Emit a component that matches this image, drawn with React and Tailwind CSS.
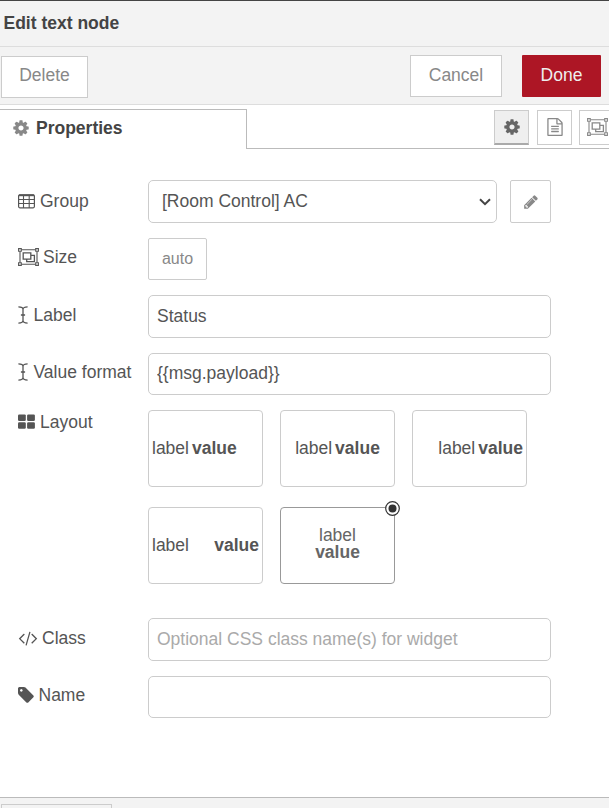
const CogIcon = ({ className = '' }) => (
  <svg width="18" height="18" viewBox="0 0 1792 1792" fill="currentColor" className={`shrink-0 ${className}`}>
    <path d="M1152 896q0-106-75-181t-181-75-181 75-75 181 75 181 181 75 181-75 75-181zm512-109v222q0 12-8 23t-20 13l-185 28q-19 54-39 91 35 50 107 138 10 12 10 25t-9 23q-27 37-99 108t-94 71q-12 0-26-9l-138-108q-44 23-91 38-16 136-29 186-7 28-36 28h-222q-14 0-24.5-8.5t-11.5-21.5l-28-184q-49-16-90-37l-141 107q-10 9-25 9-14 0-25-11-126-114-165-168-7-10-7-23 0-12 8-23 15-21 51-66.5t54-70.5q-27-50-41-99l-183-27q-13-2-21-12.5t-8-23.5v-222q0-12 8-23t19-13l186-28q14-46 39-92-40-57-107-138-10-12-10-24 0-10 9-23 26-36 98.5-107.5t94.5-71.5q13 0 26 10l138 107q44-23 91-38 16-136 29-186 7-28 36-28h222q14 0 24.5 8.5t11.5 21.5l28 184q49 16 90 37l142-107q9-9 24-9 13 0 25 10 129 119 165 170 7 8 7 22 0 12-8 23-15 21-51 66.5t-54 70.5q26 50 41 98l183 28q13 2 21 12.5t8 23.5z" />
  </svg>
);

const FileIcon = () => (
  <svg width="18" height="18" viewBox="0 0 1792 1792" fill="currentColor" className="shrink-0">
    <path d="M1596 380q28 28 48 76t20 88v1152q0 40-28 68t-68 28h-1344q-40 0-68-28t-28-68v-1600q0-40 28-68t68-28h896q40 0 88 20t76 48zm-444-244v376h376q-10-29-22-41l-313-313q-12-12-41-22zm384 1528v-1024h-416q-40 0-68-28t-28-68v-416h-768v1536h1280zm-1024-864q0-14 9-23t23-9h704q14 0 23 9t9 23v64q0 14-9 23t-23 9h-704q-14 0-23-9t-9-23v-64zm736 224q14 0 23 9t9 23v64q0 14-9 23t-23 9h-704q-14 0-23-9t-9-23v-64q0-14 9-23t23-9h704zm0 256q14 0 23 9t9 23v64q0 14-9 23t-23 9h-704q-14 0-23-9t-9-23v-64q0-14 9-23t23-9h704z" />
  </svg>
);

const GroupIcon = () => (
  <svg width="21" height="18" viewBox="0 0 21 18" fill="none" stroke="currentColor" strokeWidth="1.1" className="shrink-0">
    <path d="M3.4 1.8h14.2M3.4 16.2h14.2M2 3.2v11.6M19 3.2v11.6" />
    <path d="M.6.6h2.7v2.6H.6zM17.7.6h2.7v2.6h-2.7zM.6 14.8h2.7v2.6H.6zM17.7 14.8h2.7v2.6h-2.7z" />
    <path d="M5.2 4.8h7.6v6.4H5.2zM12.8 7.3h3.6v6.4H8.7v-2.5" strokeWidth="1.3" />
  </svg>
);

const TableIcon = () => (
  <svg width="17" height="15" viewBox="0 0 17 15" fill="none" stroke="currentColor" className="shrink-0">
    <rect x=".6" y=".8" width="15.8" height="13" rx="1.2" strokeWidth="1.2" />
    <path d="M1 1.3h15" strokeWidth="1.8" />
    <path d="M.6 5.5h15.8M.6 9.5h15.8M5.5 2v12M11.2 2v12" strokeWidth="1.1" />
  </svg>
);

const CursorIcon = () => (
  <svg width="10" height="18" viewBox="0 0 10 18" fill="none" stroke="currentColor" strokeWidth="1.3" className="shrink-0">
    <path d="M.4.9C3.2.9 5 1.6 5 3.4 5 1.6 6.8.9 9.6.9M.4 17.1c2.8 0 4.6-.7 4.6-2.5 0 1.8 1.8 2.5 4.6 2.5M5 3v12M2.9 9h4.2" />
  </svg>
);

const TilesIcon = () => (
  <svg width="17" height="15" viewBox="0 0 17 15" fill="currentColor" className="shrink-0">
    <rect width="7.8" height="6.5" y=".4" rx="1.2" />
    <rect x="9.1" y=".4" width="7.8" height="6.5" rx="1.2" />
    <rect y="8.2" width="7.8" height="6.5" rx="1.2" />
    <rect x="9.1" y="8.2" width="7.8" height="6.5" rx="1.2" />
  </svg>
);

const CodeIcon = () => (
  <svg width="20" height="18" viewBox="-30 0 1850 1792" fill="currentColor" className="shrink-0">
    <path d="M553 1399l-50 50q-10 10-23 10t-23-10l-466-466q-10-10-10-23t10-23l466-466q10-10 23-10t23 10l50 50q10 10 10 23t-10 23l-393 393 393 393q10 10 10 23t-10 23zm591-1067l-373 1291q-4 13-15.5 19.5t-23.5 2.5l-62-17q-13-4-19.5-15.5t-2.5-24.5l373-1291q4-13 15.5-19.5t23.5-2.5l62 17q13 4 19.5 15.5t2.5 24.5zm657 651l-466 466q-10 10-23 10t-23-10l-50-50q-10-10-10-23t10-23l393-393-393-393q-10-10-10-23t10-23l50-50q10-10 23-10t23 10l466 466q10 10 10 23t-10 23z" />
  </svg>
);

const TagIcon = () => (
  <svg width="16" height="16" viewBox="128 128 1536 1536" fill="currentColor" className="shrink-0">
    <path d="M576 448q0-53-37.5-90.5t-90.5-37.5-90.5 37.5-37.5 90.5 37.5 90.5 90.5 37.5 90.5-37.5 37.5-90.5zm1067 576q0 53-37 90l-491 492q-39 37-91 37-53 0-90-37l-715-716q-38-37-64.5-101t-26.5-117v-416q0-52 38-90t90-38h416q53 0 117 26.5t102 64.5l715 714q37 39 37 91z" />
  </svg>
);

const PencilIcon = () => (
  <svg width="16" height="16" viewBox="0 0 1792 1792" fill="currentColor" className="shrink-0">
    <path d="M491 1536l91-91-235-235-91 91v107h128v128h107zm523-928q0-22-22-22-10 0-17 7l-542 542q-7 7-7 17 0 22 22 22 10 0 17-7l542-542q7-7 7-17zm-54-192l416 416-832 832h-416v-416zm683 96q0 53-37 90l-166 166-416-416 166-165q36-38 90-38 53 0 91 38l235 234q37 39 37 91z" />
  </svg>
);

const Row = ({ icon, label, className, labelClass = 'h-[42px]', gap = 'gap-[5px]', children }) => (
  <div className={`flex items-start ${className}`}>
    <div className={`flex w-[148px] shrink-0 items-center pl-[18px] whitespace-nowrap ${gap} ${labelClass}`}>
      {icon}
      <span>{label}</span>
    </div>
    {children}
  </div>
);

const field = 'w-[403px] rounded-[5px] border border-[#ccc] bg-white px-2 outline-none placeholder:text-[#aaa]';
const tile = 'relative flex h-[77px] w-[115px] items-center rounded-[4px] border px-[3px] leading-[17px]';

export default function App() {
  return (
    <div className="flex h-[808px] w-[609px] flex-col overflow-hidden bg-white font-['Liberation_Sans',Arial,sans-serif] text-[17.5px] leading-[20px] text-[#555]">
      <header className="flex h-[47px] shrink-0 items-center border-t border-b border-t-[#444] border-b-[#ddd] bg-[#f3f3f3] pb-[2px] pl-[3.5px] font-bold text-[#444]">
        Edit text node
      </header>

      <div className="flex h-[58px] shrink-0 items-start border-b border-[#ddd] bg-[#f3f3f3] pr-2 pl-px text-[#888]">
        <button className="mt-[9px] h-[42px] w-[87px] border border-[#ccc] bg-white pb-[4px]">Delete</button>
        <button className="mt-2 ml-auto h-[42px] w-[92px] border border-[#ccc] bg-white pb-[3px]">Cancel</button>
        <button className="mt-2 ml-5 h-[42px] w-[79px] rounded-[1px] bg-[#ad1625] pb-[3px] text-[#eee]">Done</button>
      </div>

      <div className="flex h-[44px] shrink-0 pt-1">
        <div className="flex w-[247px] shrink-0 items-center gap-[6px] border-t border-r border-[#bbb] pb-[4px] pl-3 font-bold text-[#444]">
          <CogIcon className="text-[#888]" />
          Properties
        </div>
        <div className="flex min-w-0 flex-1 items-start gap-2 overflow-hidden border-b border-[#bbb] pt-px pl-[247px] text-[#888]">
          <button className="flex h-[35px] w-[35px] shrink-0 items-center justify-center border border-b-2 border-[#ccc] border-b-[#aaa] bg-[#efefef] text-[#666]">
            <CogIcon />
          </button>
          <button className="flex h-[35px] w-[35px] shrink-0 items-center justify-center border border-[#ccc] pb-[2px]">
            <FileIcon />
          </button>
          <button className="-ml-px flex h-[35px] w-[37px] shrink-0 items-center justify-center border border-[#ccc] pb-[2px]">
            <GroupIcon />
          </button>
        </div>
      </div>

      <main className="flex flex-1 flex-col pt-[31px]">
        <Row icon={<TableIcon />} label="Group" className="h-[58px]">
          <div className="flex h-[43px] w-[349px] items-center justify-between rounded-[5px] border border-[#ccc] pr-[5px] pb-[1px] pl-[13px]">
            <span>[Room Control] AC</span>
            <svg width="12" height="8" viewBox="0 0 12 8" fill="none" stroke="#444" strokeWidth="2" className="mt-px">
              <path d="M1 1.2l5 5 5-5" />
            </svg>
          </div>
          <button className="ml-[13px] flex h-[43px] w-[41px] items-center justify-center rounded-[2px] border border-[#ccc] text-[#888]">
            <PencilIcon />
          </button>
        </Row>
        <Row icon={<GroupIcon />} label="Size" className="h-[57px]" labelClass="h-[38px]" gap="gap-1">
          <button className="h-[42px] w-[59px] rounded-[2px] border border-[#ccc] text-[16px] text-[#888]">auto</button>
        </Row>
        <Row icon={<CursorIcon />} label="Label" className="h-[58px]" labelClass="h-[39px]" gap="gap-[5.5px]">
          <input className={`h-[43px] ${field}`} defaultValue="Status" />
        </Row>
        <Row icon={<CursorIcon />} label="Value format" className="h-[57px]" labelClass="h-[37px]" gap="gap-[5.5px]">
          <input className={`h-[42px] pb-[2px] ${field}`} defaultValue="{{msg.payload}}" />
        </Row>
        <Row icon={<TilesIcon />} label="Layout" className="h-[208px]" labelClass="h-[23px]">
          <div className="grid grid-cols-[115px_115px_115px] gap-x-[17px] gap-y-5">
            <div className={`${tile} gap-[3px] border-[#ccc]`}>
              <span>label</span><b>value</b>
            </div>
            <div className={`${tile} justify-center gap-[3px] border-[#ccc]`}>
              <span>label</span><b>value</b>
            </div>
            <div className={`${tile} justify-end gap-[3px] border-[#ccc]`}>
              <span>label</span><b>value</b>
            </div>
            <div className={`${tile} justify-between border-[#ccc]`}>
              <span>label</span><b>value</b>
            </div>
            <div className={`${tile} flex-col justify-center border-[#999] pb-[3px] text-[#666]`}>
              <span>label</span><b>value</b>
              <svg width="15" height="15" viewBox="0 0 15 15" className="absolute -top-[7px] -right-[6px]">
                <circle cx="7.5" cy="7.5" r="6.8" fill="#fff" stroke="#333" strokeWidth="1.2" />
                <circle cx="7.5" cy="7.5" r="4" fill="#333" />
              </svg>
            </div>
          </div>
        </Row>
        <Row icon={<CodeIcon />} label="Class" className="h-[58px]" labelClass="h-[39px]" gap="gap-1">
          <input className={`h-[43px] ${field}`} placeholder="Optional CSS class name(s) for widget" />
        </Row>
        <Row icon={<TagIcon />} label="Name" className="h-[42px]" labelClass="h-[37px]" gap="gap-[4.5px]">
          <input className={`h-[42px] ${field}`} />
        </Row>
      </main>

      <footer className="h-[11px] shrink-0 overflow-hidden border-t border-[#bbb] bg-[#f3f3f3] pt-[6px] pl-px">
        <div className="h-[20px] w-[111px] border border-[#ccc]" />
      </footer>
    </div>
  );
}
